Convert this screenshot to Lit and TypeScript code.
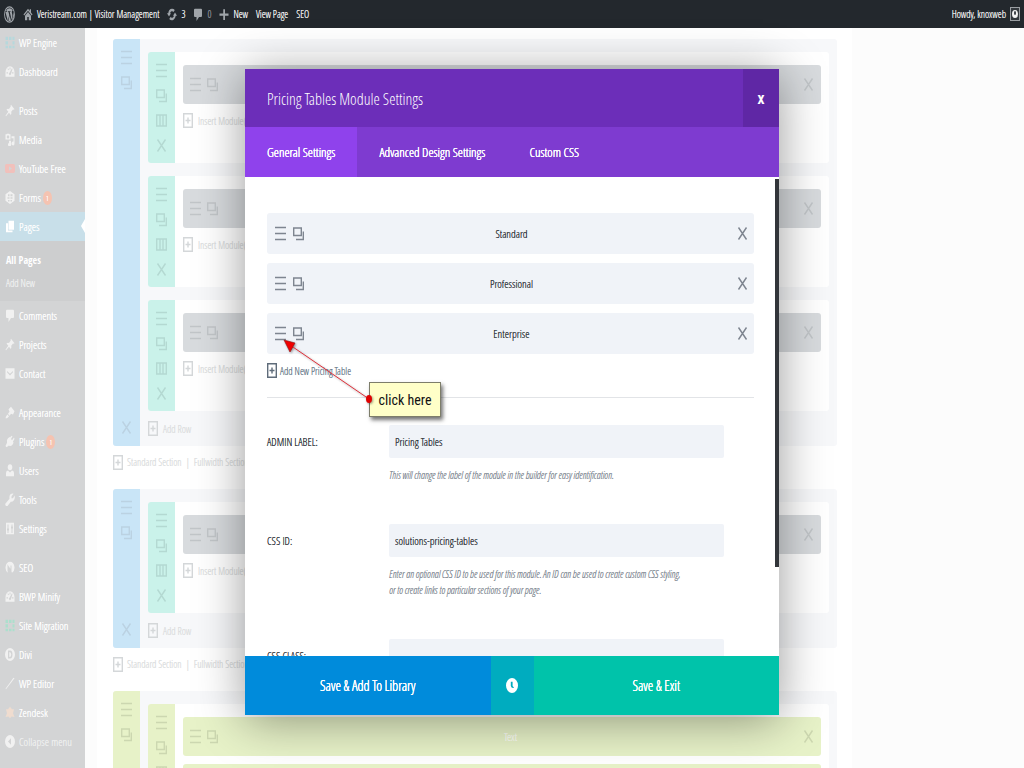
import { LitElement, html, svg, css, nothing } from "lit";

const glyphs: Record<string, unknown> = {
  wordpress: svg`<circle cx="10" cy="10" r="9" fill="none" stroke="currentColor" stroke-width="1.6"/><path d="M2.6 7 7 17.5 9.6 10.6 8.2 7h-1V6.2h4.6V7h-1.3l3.4 9.4 1.2-4.4c.6-2-.9-3.400-.9-4.800 0-1 .8-1.900 1.700-1.900A7.600 7.600 0 0 0 3.600 6.100h2V7zM17 6.600c.3 1.700.1 3.100-.7 5.400l-2.200 5.200A7.600 7.600 0 0 0 17 6.600zM10.300 11.300l-2.300 6.200c1.400.4 3 .4 4.600-.1z"/>`,
  home: svg`<path d="M10 1 1 10l1.500 1.500L10 4.200l7.500 7.300L19 10l-3-3V2h-2.500v2.500zM10 6l-6 6v7h4.500v-5h3v5H16v-7z"/>`,
  update: svg`<path d="M10 1a8 8 0 0 0-7.500 7H0l4 5 4-5H6A4.500 5 0 0 1 13 6l2.500-3A8 8 0 0 0 10 1zm6 6-4 5h2A4.500 5 0 0 1 7 14l-2.500 3A8 8 0 0 0 17.500 12H20z"/>`,
  comment: svg`<path d="M4 1h12q2 0 2 2v9q0 2-2 2h-4l-5 6v-6H4q-2 0-2-2V3q0-2 2-2z"/>`,
  plus: svg`<path d="M8.500 2h3.500v6.500H19V12h-7v6.500H8.500V12H1V8.500h7.500z"/>`,
  grid: svg`<path d="M1 1h5v5H1zM8 1h5v5H8zM15 1h4v5h-4zM1 8h5v5H1zM15 8h4v5h-4zM1 15h5v4H1zM8 15h5v4H8zM15 15h4v4h-4z"/>`,
  gauge: svg`<path fill-rule="evenodd" d="M10 2a9 9 0 0 1 9 9v7H1v-7a9 9 0 0 1 9-9zM9 4v3h2V4zM3 11v2h3v-2zm11 0v2h3v-2zM5 6l2 2 1-1-2-2zm9-1-5 7a2 2 0 1 0 3 2l3-8z"/>`,
  pin: svg`<path d="m12 1 7 7-2 1-1-.5-3.500 3.500q1 3-1 5L8 13.500 2 19l-1-1 5.500-6L3 8.500q2-2 5-1L11.500 4 11 3z"/>`,
  media: svg`<path fill-rule="evenodd" d="M1 2h2l1-1h4l1 1h2v8H1zm5 1.500a2.500 2.500 0 1 0 0 5 2.500 2.500 0 0 0 0-5zM13 5h6v11a3 3 0 1 1-2-2.800V8h-4zM8 12h4v5a3 3 0 1 1-4-2z"/>`,
  video: svg`<path fill-rule="evenodd" d="M3 3h14q3 0 3 3v8q0 3-3 3H3q-3 0-3-3V6q0-3 3-3zm5 3.500v7l6-3.500z"/>`,
  globe: svg`<path fill-rule="evenodd" d="M10 0 19 5v10l-9 5-9-5V5zM6 5v3h3V5zm5 0v3h4V5zM5 9.500V12h4V9.500zm6 0V12h4V9.500zM6 14v2h3v-2zm5 0v2h3v-2z"/>`,
  pages: svg`<path d="M7 1h11v14H7zM2 5h4v11h9v3H2z"/>`,
  mail: svg`<path fill-rule="evenodd" d="M1 2h18v16H1zM4 6v2l6 5 6-5V6l-6 4.500z"/>`,
  brush: svg`<path d="m12 1 7 7-3 5-4-1-3 3-3-3 3-3-2-4zM5 13l3 3-4 3-3 0 1-3z"/>`,
  plug: svg`<path d="m13 1 2 1-3 4 2 2 4-4 1 2-3 4 1 2-2 3q-4 3-7 1l-5 3-2-2 3-5Q2 8 6 5l3-2 1 1z"/>`,
  user: svg`<circle cx="10" cy="5" r="4.500"/><path d="M2 19v-5q0-4 4-4l4 3 4-3q4 0 4 4v5z"/>`,
  wrench: svg`<path d="M17 1 13 5v3h3l3-4q2 5-2 8-3 2-5 1l-7 7q-2 1-4-1-1-2 0-3l8-7q-1-5 2-7 3-2 6-1z"/>`,
  sliders: svg`<path fill-rule="evenodd" d="M2 1h16v18H2zM5 4v6H4v3h1v4h2v-4h1v-3H7V4zm8 0v3h-1v3h1v7h2v-7h1V7h-1V4z"/>`,
  seo: svg`<path fill-rule="evenodd" d="M10 1a9 9 0 0 1 4 17l-1-2V7h-2v5L8 9 5 5v10l1 3A9 9 0 0 1 10 1z"/>`,
  letter: svg`<path fill-rule="evenodd" d="M10 0a10 10 0 1 0 0 20 10 10 0 0 0 0-20zM6 4h4q5 0 5 6t-5 6H6zm2.500 2v8q4 0 4-4t-4-4z"/>`,
  pen: svg`<path d="m17 1 2 1L7 14 2 19l-1-1z"/>`,
  star: svg`<path d="m10 1 4 4h4l-2 6 3 6-6-1-3 3-3-3-6 1 3-6-2-6h4z"/>`,
  collapse: svg`<path fill-rule="evenodd" d="M10 0a10 10 0 1 0 0 20 10 10 0 0 0 0-20zm2 5v10l-6-5z"/>`,
  clock: svg`<path fill-rule="evenodd" d="M10 0a10 10 0 1 0 0 20 10 10 0 0 0 0-20zM8 5v5.500q1 3.500 5.500 2.500L11 10.500V5z"/>`,
};

const lines: Record<string, unknown> = {
  bars: svg`<path d="M0 1.500h11M0 7.500h11M0 13.500h11"/>`,
  copy: svg`<path d="M.7 2h7.600v7.500H.7zM10.300 5.500v8H3"/>`,
  cols: svg`<path d="M.7 2h9.600v11H.7zM4 2v11M7 2v11"/>`,
  cross: svg`<path d="m1.500 1.500 8 12M9.500 1.500l-8 12"/>`,
  add: svg`<path d="M.7.700h8.600v13.600H.7zM5 4.500v6M2.500 7.500h5"/>`,
};

const icon = (name: string, cls = "") =>
  html`<svg class="glyph ${cls}" viewBox="0 0 20 20" preserveAspectRatio="none" aria-hidden="true">${glyphs[name]}</svg>`;
const line = (name: string, cls = "") =>
  html`<svg class="line ${cls}" viewBox="0 0 11 15" aria-hidden="true">${lines[name]}</svg>`;

const base = css`
  * { box-sizing: border-box; }
  a { color: inherit; text-decoration: none; }
  button {
    margin: 0; padding: 0; border: 0; background: none; color: inherit;
    font: inherit; text-shadow: inherit; display: flex; align-items: center; justify-content: center;
  }
  .glyph { width: 10px; height: 13px; fill: currentColor; flex: none; }
  .line { width: 11px; height: 15px; fill: none; stroke: currentColor; stroke-width: 1.4; flex: none; }
`;

class AdminBar extends LitElement {
  static styles = [base, css`
    :host {
      display: flex; align-items: center; justify-content: space-between;
      height: 28px; padding: 0 4px; background: #23282d; color: #eee; font-size: 10px;
      text-shadow: 0 0 0 currentColor;
    }
    .group { display: flex; align-items: center; gap: 8px; }
    a { display: flex; align-items: center; gap: 4px; }
    .glyph { color: #a0a5aa; }
    .wp { width: 11px; height: 17px; }
    .zero { color: #8b9096; }
    .avatar { width: 10px; height: 14px; border: 1px solid #9a9ea2; }
  `];
  render() {
    return html`
      <div class="group">
        <a href="#" aria-label="WordPress">${icon("wordpress", "wp")}</a>
        <a href="#">${icon("home")}Veristream.com | Visitor Management</a>
        <a href="#">${icon("update")}3</a>
        <a href="#">${icon("comment")}<span class="zero">0</span></a>
        <a href="#">${icon("plus")}New</a>
        <a href="#">View Page</a>
        <a href="#">SEO</a>
      </div>
      <a href="#">Howdy, knoxweb
        <svg class="avatar" viewBox="0 0 8 12" preserveAspectRatio="none" aria-hidden="true">
          <rect width="8" height="12" fill="#33383d"/><ellipse cx="4" cy="6" rx="3" ry="4" fill="#f4f4f4"/>
          <ellipse cx="4" cy="5" rx="1" ry="2" fill="#33383d"/>
        </svg>
      </a>`;
  }
}
customElements.define("admin-bar", AdminBar);

type Item = { icon: string; label: string; badge?: boolean; tint?: string; current?: boolean };
const menu: Item[][] = [
  [{ icon: "grid", label: "WP Engine", tint: "teal" }, { icon: "gauge", label: "Dashboard" }],
  [
    { icon: "pin", label: "Posts" }, { icon: "media", label: "Media" },
    { icon: "video", label: "YouTube Free", tint: "red" }, { icon: "globe", label: "Forms", badge: true },
    { icon: "pages", label: "Pages", current: true }, { icon: "comment", label: "Comments" },
    { icon: "pin", label: "Projects" }, { icon: "mail", label: "Contact" },
  ],
  [
    { icon: "brush", label: "Appearance" }, { icon: "plug", label: "Plugins", badge: true },
    { icon: "user", label: "Users" }, { icon: "wrench", label: "Tools" }, { icon: "sliders", label: "Settings" },
  ],
  [
    { icon: "seo", label: "SEO" }, { icon: "gauge", label: "BWP Minify" },
    { icon: "grid", label: "Site Migration", tint: "green" }, { icon: "letter", label: "Divi" },
    { icon: "pen", label: "WP Editor" }, { icon: "star", label: "Zendesk", tint: "orange" },
    { icon: "collapse", label: "Collapse menu" },
  ],
];

class AdminMenu extends LitElement {
  static styles = [base, css`
    :host { display: block; background: #d3d4d5; color: #fff; font-size: 11px; text-shadow: 0 0 0 currentColor; }
    nav { display: flex; flex-direction: column; gap: 10px; }
    .item { display: flex; align-items: center; gap: 4px; height: 29px; padding: 0 0 0 5px; white-space: nowrap; }
    .glyph { color: #f1f1f1; }
    .teal { color: #b6d8dc; }
    .green { color: #acdfcd; }
    .red { color: #f1c0bb; }
    .orange { color: #efdccf; }
    .current { position: relative; background: #c8dfe9; }
    .current .glyph { color: #fff; }
    .current::after {
      content: ""; position: absolute; right: 0; top: 7px;
      border: 7px solid transparent; border-left-width: 0; border-right: 4px solid #fff;
    }
    .badge {
      width: 9px; height: 14px; border-radius: 50%; background: #f5c3b1; font-size: 8px;
      line-height: 14px; text-align: center; margin-left: -2px;
    }
    .sub { background: #cdcecf; padding: 7px 6px; font-size: 10px; }
    .sub a { display: flex; align-items: center; height: 23px; }
    .sub .on { font-family: "Open Sans Condensed", sans-serif; text-shadow: none; }
    .sub .off, .quiet { color: #eeefef; }
  `];
  render() {
    return html`<nav>${menu.map(group => html`<div>${group.map(i => html`
      <a href="#" class="item ${i.current ? "current" : ""} ${i.icon === "collapse" ? "quiet" : ""}">
        ${icon(i.icon, i.tint ?? "")}<span>${i.label}</span>${i.badge ? html`<span class="badge">1</span>` : nothing}
      </a>
      ${i.current ? html`<div class="sub"><a href="#" class="on">All Pages</a><a href="#" class="off">Add New</a></div>` : nothing}
    `)}</div>`)}</nav>`;
  }
}
customElements.define("admin-menu", AdminMenu);

class PageBuilder extends LitElement {
  static styles = [base, css`
    :host { display: block; padding: 11px 15px 0 16px; background: #fff; color: #dcdee0; font-size: 10px; text-shadow: 0 0 0 currentColor; }
    .section { display: grid; grid-template-columns: 27px 1fr; background: #f7f8fa; border-radius: 3px; overflow: hidden; }
    .bar { display: flex; flex-direction: column; align-items: center; gap: 10px; background: #c9e5f7; padding: 11px 0; color: #bbd2e2; }
    .bar .last { margin-top: auto; }
    .rows { padding: 13px 8px 0; }
    .row { display: grid; grid-template-columns: 27px 1fr; min-height: 111px; background: #fff; border-radius: 3px; overflow: hidden; }
    .row + .row { margin-top: 13px; }
    .tools { display: flex; flex-direction: column; align-items: center; gap: 10px; padding: 11px 0 0; background: #caf2ea; color: #b4d9d2; }
    .modules { padding: 13px 8px 0; display: flex; flex-direction: column; gap: 8px; }
    .module { display: flex; align-items: center; gap: 6px; height: 39px; padding: 0 7px; background: #d8dbde; border-radius: 3px; color: #c1c5c8; }
    .module .name { flex: 1; text-align: center; font-size: 11px; color: #fbfdf5; }
    .add { display: flex; align-items: center; gap: 4px; height: 17px; white-space: nowrap; }
    .add .line { color: #d4d7d9; }
    .foot { height: 35px; }
    .between { height: 43px; padding-bottom: 11px; gap: 3px; }
    .between i { font-style: normal; padding: 0 1px; }
    .green .bar, .green .tools, .green .module { background: #e7f2c8; color: #ccd7b0; }
  `];
  private tools(n: string[]) {
    return n.map(x => html`<button aria-label=${x} class=${x === "remove" ? "last" : ""}>${line(
      ({ settings: "bars", clone: "copy", columns: "cols", remove: "cross" } as Record<string, string>)[x])}</button>`);
  }
  private module(name: string) {
    return html`<div class="module">${this.tools(["settings", "clone"])}<span class="name">${name}</span>${this.tools(["remove"])}</div>`;
  }
  private row(names: string[]) {
    return html`<div class="row">
      <div class="tools">${this.tools(["settings", "clone", "columns", "remove"])}</div>
      <div class="modules">${names.map(n => this.module(n))}
        <a href="#" class="add">${line("add")}Insert Module(s)</a>
      </div></div>`;
  }
  private section(count: number, names: string[], cls = "") {
    return html`<div class="section ${cls}">
      <div class="bar">${this.tools(["settings", "clone", "remove"])}</div>
      <div class="rows">${Array.from({ length: count }, () => this.row(names))}
        <a href="#" class="add foot">${line("add")}Add Row</a>
      </div></div>
      <div class="add between">${line("add")}<a href="#">Standard Section</a><i>|</i><a href="#">Fullwidth Section</a></div>`;
  }
  render() {
    return html`${this.section(3, [""])}${this.section(1, [""])}${this.section(1, ["Text", ""], "green")}`;
  }
}
customElements.define("page-builder", PageBuilder);

class ModuleSettings extends LitElement {
  static styles = [base, css`
    :host {
      display: flex; flex-direction: column; background: #fff; color: #32373c;
      box-shadow: 0 5px 45px rgba(0, 0, 0, .4); font-size: 11px; text-shadow: 0 0 0 currentColor;
    }
    header { display: flex; height: 58px; flex: none; background: #6c2eb9; color: #fff; }
    h1 { flex: 1; margin: 0; padding-left: 22px; font-size: 16px; line-height: 60px; font-weight: 300; text-shadow: none; }
    .close { width: 36px; background: #5f27a5; font-family: "Open Sans Condensed", sans-serif; font-size: 16px; text-shadow: none; }
    .tabs { display: flex; height: 50px; flex: none; background: #7e3bd0; color: #fff; font-size: 13px; text-shadow: 0 0 0 currentColor, 0 0 0 currentColor; }
    .tabs button { padding: 0 22px; }
    .tabs .on { background: #8f42ec; }
    .body { flex: 1; min-height: 0; position: relative; overflow: hidden; padding: 36px 25px 0 22px; }
    .thumb { position: absolute; right: 0; top: 2px; width: 4px; height: 81%; background: #32353a; }
    ul { list-style: none; margin: 0; padding: 0; display: flex; flex-direction: column; gap: 9px; }
    li { display: grid; grid-template-columns: 1fr auto 1fr; align-items: center; height: 41px; padding: 0 6px 0 8px; background: #f0f3f8; border-radius: 3px; }
    li .line { color: #7e8590; }
    .tools { display: flex; gap: 7px; }
    .tools.end { justify-content: flex-end; }
    .new { display: flex; align-items: center; gap: 2px; height: 33px; color: #6f7f8f; font-size: 10px; }
    .new .line { color: #5f6c7a; }
    hr { margin: 10px 0 27px; border: 0; border-top: 1px solid #e2e4e7; }
    .field { display: grid; grid-template-columns: 122px 1fr; padding: 0 30px 41px 0; }
    label { line-height: 33px; }
    input {
      display: block; width: 100%; height: 33px; border: 0; padding: 0 6px; background: #f0f3f8; border-radius: 2px;
      font: inherit; color: inherit; text-shadow: inherit;
    }
    .help { margin: 9px 0 0; font-style: italic; font-size: 10px; line-height: 16px; color: #858d96; }
    footer { display: flex; height: 59px; flex: none; color: #fff; font-size: 14px; text-shadow: 0 0 0 currentColor, 0 0 0 currentColor; }
    footer .save { flex: 1; background: #008bdb; }
    footer .time { width: 43px; background: #00acbf; }
    footer .exit { flex: 1; background: #00c3aa; }
    .time .glyph { width: 12px; height: 15px; }
  `];
  private field(id: string, label: string, value: string, help: unknown) {
    return html`<div class="field"><label for=${id}>${label}</label><div>
      <input id=${id} .value=${value}><p class="help">${help}</p></div></div>`;
  }
  render() {
    return html`
      <header><h1>Pricing Tables Module Settings</h1><button class="close" aria-label="Close">x</button></header>
      <div class="tabs"><button class="on">General Settings</button><button>Advanced Design Settings</button><button>Custom CSS</button></div>
      <div class="body">
        <ul>${["Standard", "Professional", "Enterprise"].map(n => html`<li>
          <div class="tools"><button aria-label="Edit ${n}">${line("bars")}</button><button aria-label="Clone ${n}">${line("copy")}</button></div>
          <span>${n}</span>
          <div class="tools end"><button aria-label="Remove ${n}">${line("cross")}</button></div></li>`)}</ul>
        <a href="#" class="new">${line("add")}Add New Pricing Table</a>
        <hr>
        ${this.field("admin", "ADMIN LABEL:", "Pricing Tables", "This will change the label of the module in the builder for easy identification.")}
        ${this.field("cssid", "CSS ID:", "solutions-pricing-tables", html`Enter an optional CSS ID to be used for this module. An ID can be used to create custom CSS styling,<br>or to create links to particular sections of your page.`)}
        ${this.field("cssclass", "CSS CLASS:", "", "")}
        <div class="thumb"></div>
      </div>
      <footer><button class="save">Save &amp; Add To Library</button><button class="time" aria-label="History">${icon("clock")}</button><button class="exit">Save &amp; Exit</button></footer>`;
  }
}
customElements.define("module-settings", ModuleSettings);

class AppRoot extends LitElement {
  static styles = css`
    :host {
      display: flex; flex-direction: column; position: relative; height: 100vh; overflow: hidden;
      background: #fcfcfc; font-family: "Open Sans Condensed Light", "Open Sans", sans-serif; font-weight: 300;
    }
    .page { flex: 1; min-height: 0; display: grid; grid-template-columns: 85px 1fr; overflow: hidden; }
    page-builder { margin: 0 172px 0 12px; }
    main { min-width: 0; }
    module-settings { position: absolute; left: 245px; right: 245px; top: 69px; bottom: 53px; }
    .note { position: absolute; left: 280px; top: 336px; width: 165px; height: 84px; }
    .note svg { position: absolute; inset: 0; width: 165px; height: 84px; overflow: visible; filter: drop-shadow(1px 1px 1px rgba(0, 0, 0, .4)); }
    .tip {
      position: absolute; right: 4px; bottom: 3px; width: 72px; height: 35px; box-sizing: border-box; display: grid; place-items: center;
      background: #ffffc8; border: 1px solid #7d7d6a; box-shadow: 2px 3px 4px rgba(0, 0, 0, .55);
      color: #111; font: 400 14px "Roboto Condensed", "Liberation Sans", sans-serif;
    }
  `;
  render() {
    return html`
      <admin-bar></admin-bar>
      <div class="page"><admin-menu></admin-menu><main><page-builder></page-builder></main></div>
      <module-settings></module-settings>
      <div class="note">
        <div class="tip">click here</div>
        <svg viewBox="0 0 165 84" aria-hidden="true">
          <path d="M10 9 89 63" stroke="#e0303a" stroke-width="1"/>
          <path d="M4 4 15 7 10 16z" fill="#f00000" stroke="#8c1010" stroke-width=".6"/>
          <ellipse cx="89" cy="63" rx="3" ry="4" fill="#e00000"/>
        </svg>
      </div>`;
  }
}
customElements.define("app-root", AppRoot);
